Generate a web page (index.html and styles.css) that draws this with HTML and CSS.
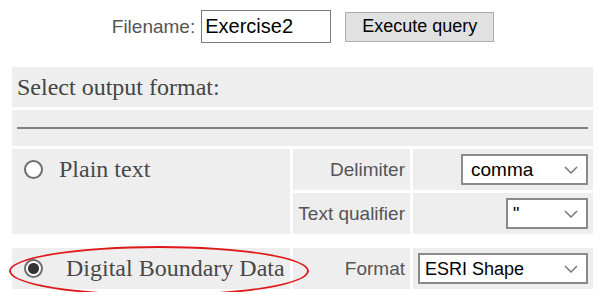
FILE: index.html
```html
<!DOCTYPE html>
<html lang="en">
<head>
    <meta charset="UTF-8">
    <title>Export query</title>
    <link rel="stylesheet" href="styles.css">
</head>
<body>

<div id="toolbar">
    <label for="filename">Filename:</label>
    <input type="text" id="filename" value="Exercise2">
    <button id="executeButton">Execute query</button>
</div>

<table id="formats">
    <tr>
        <td colspan="3" class="heading">Select output format:</td>
    </tr>
    <tr>
        <td colspan="3" class="rule"><hr></td>
    </tr>
    <tr>
        <td rowspan="2" class="choice">
            <label><input type="radio" name="format"> Plain text</label>
        </td>
        <td class="option">Delimiter</td>
        <td class="value">
            <select class="delimiter">
                <option>comma</option>
                <option>tab</option>
                <option>semicolon</option>
            </select>
        </td>
    </tr>
    <tr>
        <td class="option">Text qualifier</td>
        <td class="value">
            <select class="qualifier">
                <option>"</option>
                <option>'</option>
            </select>
        </td>
    </tr>
    <tr class="spacer">
        <td colspan="3"></td>
    </tr>
    <tr>
        <td class="choice marked">
            <label><input type="radio" name="format" checked> Digital Boundary Data</label>
            <div class="circled"></div>
        </td>
        <td class="option">Format</td>
        <td class="value">
            <select class="shape">
                <option>ESRI Shape</option>
                <option>MapInfo</option>
            </select>
        </td>
    </tr>
</table>

</body>
</html>
```

FILE: styles.css
```css
body {
    margin: 0;
    background: white;
    color: #4a4a4a;
    font-family: "Liberation Sans", Arial, sans-serif;
}

#toolbar {
    display: flex;
    justify-content: center;
    align-items: center;
    padding-top: 10px;
    height: 33px;
}

#toolbar label {
    font-size: 19px;
    color: #555555;
    margin-right: 6px;
}

#filename {
    box-sizing: border-box;
    width: 130px;
    height: 33px;
    border: solid 1px #7a7a7a;
    padding: 0 3px;
    font-family: "Liberation Sans", Arial, sans-serif;
    font-size: 20px;
    color: black;
    outline: none;
}

#executeButton {
    box-sizing: border-box;
    margin-left: 14px;
    width: 149px;
    height: 30px;
    background: #e1e1e1;
    border: solid 1px #adadad;
    border-radius: 0;
    font-family: "Liberation Sans", Arial, sans-serif;
    font-size: 18px;
    color: black;
    padding: 0;
}

#formats {
    margin: 21px 9px 0 9px;
    width: 587px;
    border-spacing: 3px;
}

#formats td {
    background: #eeeeee;
    padding: 0 5px;
}

.heading {
    height: 40px;
    font-family: "Liberation Serif", "Times New Roman", serif;
    font-size: 24px;
    color: #444444;
}

.rule {
    height: 36px;
}

.rule hr {
    margin: 0;
    border: none;
    border-top: solid 2px #808080;
}

.choice {
    width: 268px;
    vertical-align: top;
    font-family: "Liberation Serif", "Times New Roman", serif;
    font-size: 24px;
    color: #484848;
}

.choice label {
    display: flex;
    align-items: center;
    height: 41px;
    gap: 16px;
    padding-left: 7px;
}

.marked {
    position: relative;
    vertical-align: middle;
}

.marked label {
    gap: 23px;
}

.choice input {
    appearance: none;
    margin: 0;
    width: 19px;
    height: 19px;
    border: solid 2px #6e6e6e;
    border-radius: 50%;
    background: white;
}

.choice input:checked {
    background: radial-gradient(circle, #333333 0 5px, white 6px);
}

.circled {
    position: absolute;
    left: -3px;
    top: -2px;
    width: 296px;
    height: 46px;
    border: solid 2px #e01818;
    border-radius: 50%;
    pointer-events: none;
}

.option {
    width: 107px;
    height: 41px;
    text-align: right;
    font-size: 19px;
    color: #555555;
}

.value {
    text-align: right;
}

select {
    appearance: none;
    box-sizing: border-box;
    height: 31px;
    border: solid 2px #8a8a8a;
    border-radius: 0;
    background: white url("data:image/svg+xml,%3Csvg xmlns='http://www.w3.org/2000/svg' width='14' height='8'%3E%3Cpath d='M1 1l6 6 6-6' fill='none' stroke='%23777' stroke-width='1.5'/%3E%3C/svg%3E") no-repeat right 8px center;
    font-family: "Liberation Sans", Arial, sans-serif;
    font-size: 18px;
    color: black;
    padding: 0 5px;
    vertical-align: middle;
}

.delimiter {
    width: 127px;
    padding-left: 8px;
    font-size: 19px;
}

.qualifier {
    width: 82px;
}

.shape {
    width: 170px;
}

.spacer td {
    height: 8px;
    padding: 0;
}

#formats .spacer td {
    background: none;
}
```
